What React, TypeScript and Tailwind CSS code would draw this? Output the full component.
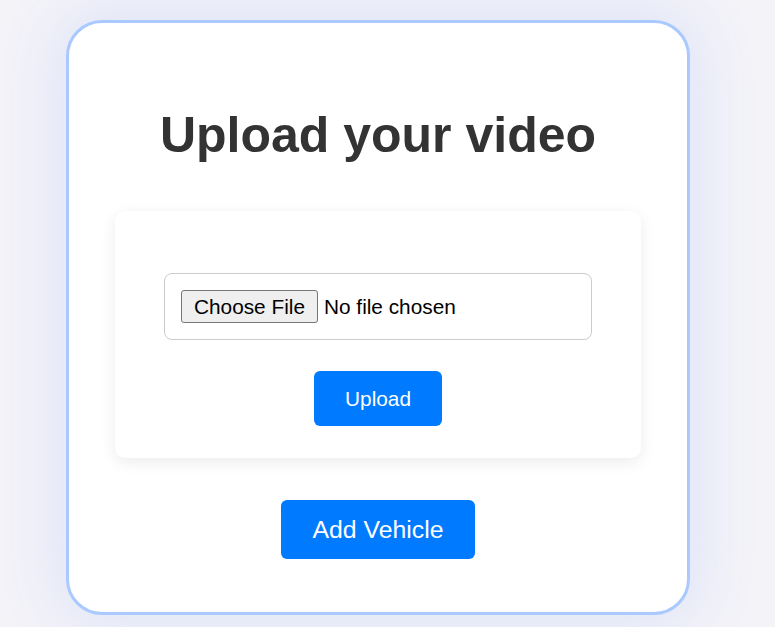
export default function App() {
  return (
    <div className="min-h-screen bg-[#f3f3f8] pt-[20px] pb-[14px] font-['Liberation_Sans',Arial,sans-serif]">
      <div className="ml-[66px] w-[624px] rounded-[36px] border-[3px] border-[#a9c9ff] bg-white pt-[84px] pb-[53px] px-[46px] flex flex-col items-center shadow-[0_0_60px_10px_rgba(100,130,255,0.13)]">
        <h1 className="text-[50px] leading-[56px] font-bold text-[#333]">Upload your video</h1>
        <div className="mt-[48px] w-[526px] rounded-[10px] bg-white px-[49px] pt-[62px] pb-[32px] flex flex-col items-center shadow-[0_4px_16px_rgba(0,0,0,0.08)]">
          <input
            type="file"
            className="block w-full h-[67px] p-4 border border-[#ccc] rounded-lg text-[20.8px] text-black file:h-[33px] file:px-[12px] file:mr-[6px] file:border file:border-[#767676] file:rounded-[3px] file:bg-[#efefef] file:text-black"
          />
          <button className="mt-[31px] h-[55px] px-[31px] rounded-md bg-[#007bff] text-white text-[20.8px]">
            Upload
          </button>
        </div>
        <button className="mt-[42px] h-[59px] px-[32px] rounded-md bg-[#007bff] text-white text-[24.8px]">
          Add Vehicle
        </button>
      </div>
    </div>
  );
}
